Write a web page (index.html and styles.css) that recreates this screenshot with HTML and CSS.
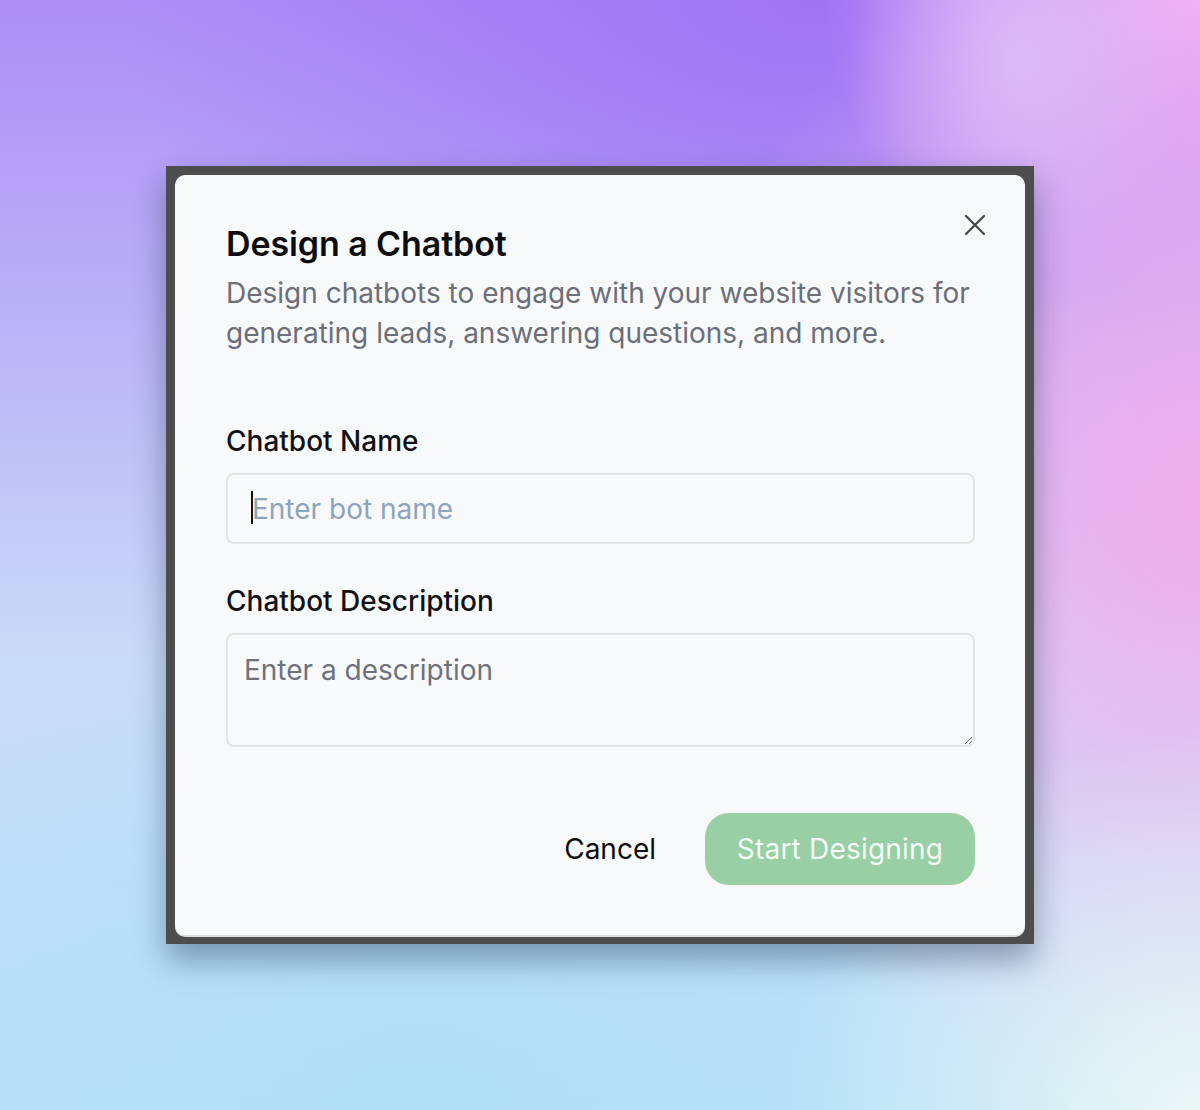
FILE: index.html
```html
<!DOCTYPE html>
<html lang="en">
<head>
    <meta charset="UTF-8">
    <meta name="viewport" content="width=device-width, initial-scale=1.0">
    <title>Design a Chatbot</title>
    <link rel="stylesheet" href="styles.css">
</head>
<body>
    <div class="frame">
        <div class="modal">
            <button class="close-button" aria-label="Close">
                <svg width="22" height="22" viewBox="0 0 22 22" fill="none" stroke="#454545" stroke-width="2.2" stroke-linecap="round">
                    <path d="M2 2L20 20M20 2L2 20"/>
                </svg>
            </button>
            <h2 class="modal-title">Design a Chatbot</h2>
            <p class="modal-text">Design chatbots to engage with your website visitors for generating leads, answering questions, and more.</p>

            <label class="field-label" for="bot-name">Chatbot Name</label>
            <div class="input-wrap">
                <input id="bot-name" class="text-input" type="text" placeholder="Enter bot name">
                <span class="caret"></span>
            </div>

            <label class="field-label second" for="bot-desc">Chatbot Description</label>
            <textarea id="bot-desc" class="text-area" placeholder="Enter a description"></textarea>

            <div class="modal-actions">
                <button class="button cancel">Cancel</button>
                <button class="button primary">Start Designing</button>
            </div>
        </div>
    </div>
</body>
</html>
```

FILE: styles.css
```css
html, body {
    margin: 0;
    padding: 0;
    height: 100%;
}
body {
    min-height: 100vh;
    display: flex;
    justify-content: center;
    align-items: center;
    font-family: 'Inter', 'Noto Sans', sans-serif;
    background-color: #b4c8f6;
    background-image:
        radial-gradient(ellipse 420px 380px at 100% 100%, rgba(238, 248, 244, 0.95) 0%, rgba(238, 248, 244, 0) 100%),
        radial-gradient(ellipse 170px 230px at 1020px 60px, rgba(222, 198, 248, 0.75) 0%, rgba(222, 198, 248, 0) 100%),
        radial-gradient(ellipse 520px 620px at 100% 45%, #f0aeec 0%, rgba(240, 174, 236, 0) 100%),
        radial-gradient(ellipse 380px 300px at 100% 0%, #f2b4f6 0%, rgba(242, 180, 246, 0) 100%),
        radial-gradient(ellipse 700px 420px at 68% 0%, #9f74f4 0%, rgba(159, 116, 244, 0) 100%),
        radial-gradient(ellipse 700px 500px at 35% 100%, #b2e0f8 0%, rgba(178, 224, 248, 0) 100%),
        linear-gradient(180deg, #ad8ef6 0%, #bdbaf6 35%, #cbdcf8 60%, #b8e0f8 100%);
}
.frame {
    background-color: #4d4d4d;
    padding: 9px;
    box-shadow: 0 16px 30px rgba(20, 40, 70, 0.4);
}
.modal {
    position: relative;
    width: 850px;
    height: 760px;
    box-sizing: border-box;
    padding: 49px 50px 50px 51px;
    background-color: #f8f9fb;
    border-radius: 10px;
    box-shadow: 0 2px 0 #dcdde0;
    display: flex;
    flex-direction: column;
}
.close-button {
    position: absolute;
    top: 39px;
    right: 39px;
    width: 22px;
    height: 22px;
    padding: 0;
    border: none;
    background: none;
    cursor: pointer;
}
.close-button svg {
    display: block;
}
.modal-title {
    margin: 0;
    font-size: 34px;
    line-height: 40px;
    font-weight: 600;
    letter-spacing: -0.1px;
    color: #0d0d0f;
}
.modal-text {
    margin: 9px 0 0 0;
    font-size: 28px;
    line-height: 40px;
    color: #6b6f78;
}
.field-label {
    display: block;
    margin-top: 72px;
    font-size: 28px;
    line-height: 32px;
    font-weight: 500;
    color: #111216;
}
.field-label.second {
    margin-top: 41px;
}
.input-wrap {
    position: relative;
    margin-top: 16px;
}
.text-input,
.text-area {
    display: block;
    width: 100%;
    box-sizing: border-box;
    border: 2px solid #e3e4e8;
    border-radius: 8px;
    background-color: #f8f9fb;
    font-family: inherit;
    font-size: 28px;
    color: #111216;
    outline: none;
}
.text-input {
    height: 71px;
    padding: 0 24px;
}
.text-input::placeholder {
    color: #8ea4ba;
}
.caret {
    position: absolute;
    left: 25px;
    top: 18px;
    width: 2px;
    height: 33px;
    background-color: #111;
}
.text-area {
    margin-top: 16px;
    height: 114px;
    padding: 15px 16px;
    resize: vertical;
    line-height: 40px;
}
.text-area::placeholder {
    color: #6e727a;
}
.modal-actions {
    margin-top: auto;
    display: flex;
    justify-content: flex-end;
    align-items: center;
    gap: 49px;
}
.button {
    font-family: inherit;
    font-size: 28px;
    border: none;
    cursor: pointer;
}
.cancel {
    background: none;
    color: #0d0d0f;
    padding: 0;
}
.primary {
    height: 72px;
    width: 270px;
    border-radius: 24px;
    background-color: #98cfa5;
    color: #f4faf5;
    letter-spacing: 0.2px;
}
```
